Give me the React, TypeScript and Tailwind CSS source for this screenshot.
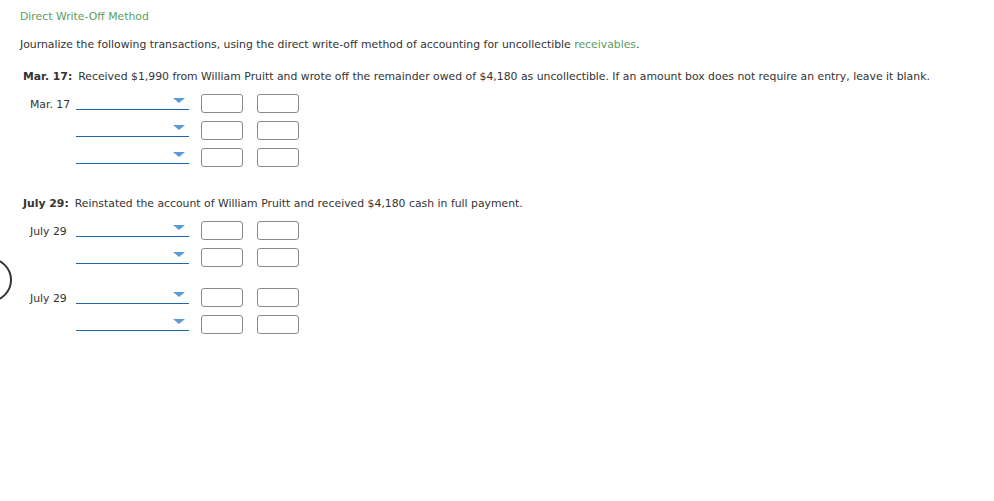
import React from "react";

const font = { fontFamily: '"DejaVu Sans", Verdana, sans-serif' };

function Select() {
  return (
    <div className="mt-[1px] flex h-[15px] w-[113px] shrink-0 items-start justify-end border-b-[1.5px] border-[#2467a8] pr-[4px]">
      <div className="mt-[3px] h-0 w-0 border-x-[6px] border-t-[5px] border-x-transparent border-t-[#5b9bd5]" />
    </div>
  );
}

function Box() {
  return <div className="h-[19px] w-[42px] rounded-[3px] border border-[#8a8a8a] bg-white" />;
}

function Row({ label }: { label?: string }) {
  return (
    <div className="flex h-[27px] items-start pt-[4px]">
      <div className="w-[56px] shrink-0 whitespace-nowrap pl-[10px] pt-[1px] leading-[19px] text-[#333]">{label ?? ""}</div>
      <Select />
      <div className="ml-[12px] shrink-0">
        <Box />
      </div>
      <div className="ml-[14px] shrink-0">
        <Box />
      </div>
    </div>
  );
}

export default function App() {
  return (
    <div className="relative h-[501px] w-[994px] overflow-hidden bg-white pl-[20px] pt-[10px] text-[10.85px] text-[#333]" style={font}>
      <div className="h-[14px] leading-[14px] text-[#5d9c62]">Direct Write-Off Method</div>
      <div className="mt-[14px] h-[14px] leading-[14px]">
        Journalize the following transactions, using the direct write-off method of accounting for uncollectible{" "}
        <span className="text-[#5d9c62]">receivables</span>.
      </div>
      <div className="ml-[3px] mt-[18px] h-[14px] whitespace-nowrap leading-[14px]">
        <span className="mr-[6px] font-bold">Mar. 17:</span>
        Received $1,990 from William Pruitt and wrote off the remainder owed of $4,180 as uncollectible. If an amount box does not require an entry, leave it blank.
      </div>
      <div className="mt-[6px]">
        <Row label="Mar. 17" />
        <Row />
        <Row />
      </div>
      <div className="ml-[3px] mt-[26px] h-[14px] leading-[14px]">
        <span className="mr-[6px] font-bold">July 29:</span>
        Reinstated the account of William Pruitt and received $4,180 cash in full payment.
      </div>
      <div className="mt-[6px]">
        <Row label="July 29" />
        <Row />
      </div>
      <div className="mt-[13px]">
        <Row label="July 29" />
        <Row />
      </div>
      <div className="absolute left-[-32px] top-[258px] h-[44px] w-[44px] rounded-full border-2 border-[#333]" />
    </div>
  );
}
